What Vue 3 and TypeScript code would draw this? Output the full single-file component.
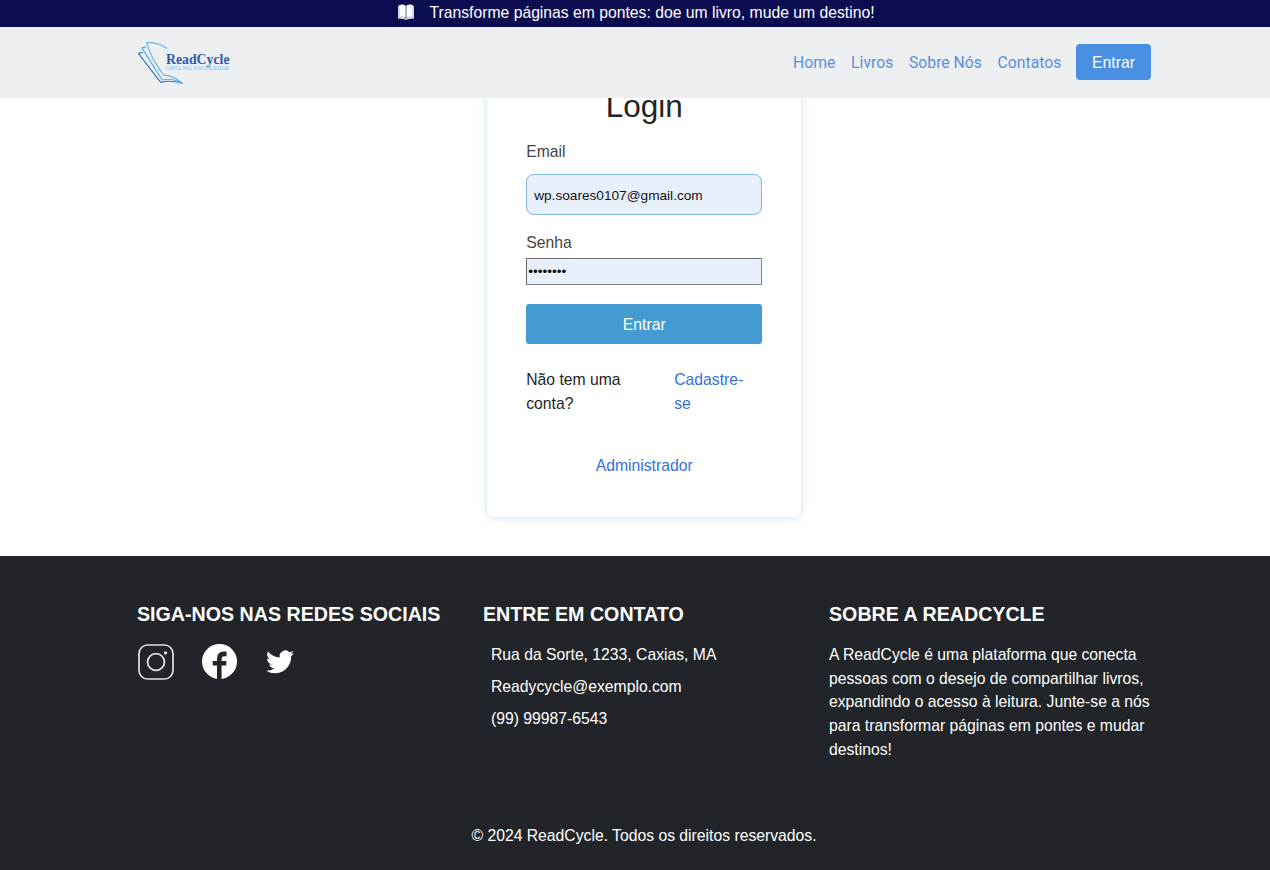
<script setup lang="ts">
import { ref } from 'vue'

const email = ref('wp.soares0107@gmail.com')
const password = ref('12345678')
const links: string[] = ['Home', 'Livros', 'Sobre Nós', 'Contatos']
const contacts: string[] = ['Rua da Sorte, 1233, Caxias, MA', 'Readycycle@exemplo.com', '(99) 99987-6543']
</script>

<template>
  <div class="page">
    <header class="header">
      <div class="banner">
        <svg class="book" viewBox="0 0 18 18" width="18" height="18">
          <path d="M1 3.2 2.3 2.8V14.2C5 13.5 7.400 13.900 9 15.400 10.600 13.900 13 13.500 15.700 14.200V2.800L17 3.200V15.500L10.500 16.200Q9 17.200 7.500 16.200L1 15.500Z" fill="#d5d7e8" />
          <path d="M2.200 1.900Q6.300.8 8.700 2.700V14.700Q6.200 13 2.200 14ZM15.800 1.900Q11.700.8 9.300 2.700V14.700Q11.800 13 15.800 14Z" fill="#fff" />
        </svg>
        <span>Transforme páginas em pontes: doe um livro, mude um destino!</span>
      </div>
      <nav class="nav">
        <svg class="logo" viewBox="0 0 98 50" width="98" height="50">
          <g fill="none" stroke-linejoin="round" stroke-linecap="round">
            <path d="M5.500 15.300 1.300 16.300 23.700 45.300Q34 42.800 45 46.300" stroke="#3e78bd" stroke-width="1.200" />
            <path d="M8.700 9.800 4.900 10.900 25.200 43Q35 40.500 45 46.200" stroke="#55aee6" stroke-width="1.200" />
            <path d="M29.500 11.300Q22 5.300 9.700 5.700 13 20 27 38.500 36 38 45.200 46.300" stroke="#62b9ed" stroke-width="1.200" />
          </g>
          <text x="29" y="26.700" textLength="63.500" lengthAdjust="spacingAndGlyphs" class="logo-name">ReadCycle</text>
          <text x="28.500" y="32.800" textLength="64" lengthAdjust="spacingAndGlyphs" class="logo-tag">CIRCLING KNOWLEDGE</text>
        </svg>
        <div class="links">
          <a v-for="link in links" :key="link">{{ link }}</a>
          <button class="nav-button">Entrar</button>
        </div>
      </nav>
    </header>

    <main class="main">
      <form class="card" @submit.prevent>
        <h2>Login</h2>
        <label for="email">Email</label>
        <input id="email" v-model="email" class="email" type="text" />
        <label for="password" class="password-label">Senha</label>
        <input id="password" v-model="password" class="password" type="password" />
        <button class="submit">Entrar</button>
        <div class="register">
          <span>Não tem uma conta?</span>
          <a>Cadastre-se</a>
        </div>
        <a class="admin">Administrador</a>
      </form>
    </main>

    <footer class="footer">
      <div class="columns">
        <section>
          <h5>SIGA-NOS NAS REDES SOCIAIS</h5>
          <div class="social">
            <svg viewBox="0 0 36 36" width="36" height="36" fill="none" stroke="#dfe0e1">
              <rect x="1" y="1" width="34" height="34" rx="8.500" stroke-width="1.700" />
              <circle cx="18" cy="18" r="8.400" stroke-width="1.800" />
              <circle cx="27.500" cy="8.900" r="1.700" fill="#dfe0e1" stroke="none" />
            </svg>
            <svg viewBox="0 0 16 16" width="35" height="35">
              <circle cx="8" cy="8" r="8" fill="#fff" />
              <path d="M11.200 4.500H10Q7.900 4.500 7.900 6.700V16M4.900 8.800H11.100" fill="none" stroke="#212529" stroke-width="2.100" />
            </svg>
            <svg class="twitter" viewBox="0 0 16 16" width="28" height="28" fill="#fff">
              <path d="M5.026 15c6.038 0 9.341-5.003 9.341-9.334q.002-.211-.006-.422A6.700 6.700 0 0 0 16 3.542a6.700 6.700 0 0 1-1.889.518 3.300 3.300 0 0 0 1.447-1.817 6.500 6.500 0 0 1-2.087.793A3.286 3.286 0 0 0 7.875 6.030a9.320 9.320 0 0 1-6.767-3.429 3.290 3.290 0 0 0 1.018 4.382A3.300 3.300 0 0 1 .64 6.575v.045a3.290 3.290 0 0 0 2.632 3.218 3.200 3.200 0 0 1-.865.115 3 3 0 0 1-.614-.057 3.280 3.280 0 0 0 3.067 2.277A6.600 6.600 0 0 1 .78 13.580a6 6 0 0 1-.780-.045A9.340 9.340 0 0 0 5.026 15" />
            </svg>
          </div>
        </section>
        <section>
          <h5>ENTRE EM CONTATO</h5>
          <p v-for="line in contacts" :key="line" class="contact">{{ line }}</p>
        </section>
        <section>
          <h5>SOBRE A READCYCLE</h5>
          <p class="about">A ReadCycle é uma plataforma que conecta pessoas com o desejo de compartilhar livros, expandindo o acesso à leitura. Junte-se a nós para transformar páginas em pontes e mudar destinos!</p>
        </section>
      </div>
      <p class="copyright">© 2024 ReadCycle. Todos os direitos reservados.</p>
    </footer>
  </div>
</template>

<style>
body { margin: 0; }
</style>

<style scoped>
* { box-sizing: border-box; }
.page {
  height: 870px;
  overflow: hidden;
  display: flex;
  flex-direction: column;
  background: #fff;
  color: #212529;
  font: 15.72px/23.6px "Liberation Sans", Arial, sans-serif;
}
.header { position: relative; z-index: 1; flex: none; }
.banner {
  height: 27px;
  display: flex;
  justify-content: center;
  align-items: center;
  gap: 15px;
  padding-left: 1px;
  padding-bottom: 1px;
  background: #0c0c50;
  color: #fff;
}
.book { margin-top: -3px; }
.nav {
  height: 71px;
  display: flex;
  justify-content: space-between;
  padding: 0 119px 0 137px;
  background: #eeeff1;
}
.logo { margin-top: 10px; }
.logo-name { font: bold 14.500px "Liberation Serif", serif; fill: #2c5bac; }
.logo-tag { font: 5.800px "Liberation Sans", sans-serif; fill: #7cc4f1; }
.links {
  display: flex;
  align-items: center;
  gap: 15.750px;
  padding-bottom: 1px;
  color: #5a8edb;
  font-family: Roboto, sans-serif;
}
.links a { padding-top: 2px; }
.nav-button {
  width: 75px;
  height: 36px;
  margin-left: -1px;
  padding: 2px 0 0;
  border: 0;
  border-radius: 4px;
  background: #4a90e2;
  color: #fff;
  font: 15.750px "Liberation Sans", Arial, sans-serif;
}
.main { height: 458px; flex: none; padding-left: 18px; display: flex; justify-content: center; }
.card {
  width: 314px;
  height: 467px;
  margin-top: -48px;
  padding: 37px 38.800px 0 39.200px;
  border-radius: 8px;
  box-shadow: 0 0 8px rgba(67, 155, 209, .3);
  display: flex;
  flex-direction: column;
}
h2 { margin: 0 0 15px; text-align: center; font-size: 31.500px; line-height: 38px; font-weight: 400; }
label { color: #444; height: 24px; }
input { width: 100%; background: #e8f0fe; color: #111; font: 13.650px "Liberation Sans", Arial, sans-serif; outline: 0; }
.email { height: 41px; margin-top: 10px; padding: 2px 7px 0; border: 1px solid #7fb6dd; border-radius: 8px; }
.password-label { margin-top: 16px; }
.password { height: 27px; margin-top: 3px; padding: 1px; border: 1px solid #858585; border-top-color: #6d6d6d; border-left-color: #6d6d6d; }
.submit {
  height: 40px;
  flex: none;
  margin-top: 19px;
  padding: 2px 0 0;
  border: 0;
  border-radius: 3px;
  background: #439bd1;
  color: #fff;
  font: 15.750px "Liberation Sans", Arial, sans-serif;
}
.register { display: flex; justify-content: space-between; margin-top: 24px; }
.register span { width: 110px; }
.register a { width: 88px; padding-right: 14px; }
.card a { color: #3470da; }
.card .admin { margin-top: 39px; text-align: center; }
.footer { flex: 1; padding: 46px 101px 0 137px; background: #212529; color: #fff; }
.columns { display: grid; grid-template-columns: 346px 346px 340px; height: 222px; }
h5 { margin: 0 0 17.300px; font-size: 19.650px; line-height: 24px; font-weight: 700; white-space: nowrap; }
.social { display: flex; align-items: center; gap: 28px; padding: .700px 0 0 1px; }
.social svg { display: block; }
.twitter { margin: 0 0 2px 1px; }
.contact { margin: 0 0 8.100px 8px; }
.about { margin: 0; width: 326px; }
.copyright { margin: 0; padding-right: 18px; text-align: center; }
</style>
